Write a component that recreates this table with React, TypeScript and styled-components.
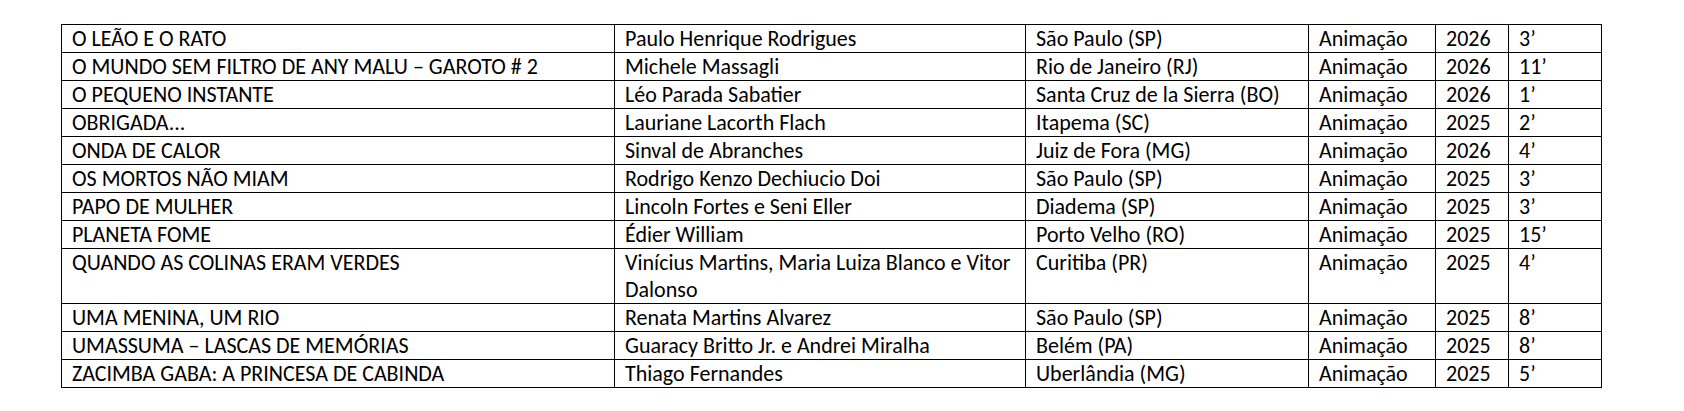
import React from "react";
import styled, { createGlobalStyle } from "styled-components";

const GlobalStyle = createGlobalStyle`
  html, body {
    margin: 0;
    padding: 0;
    background: #ffffff;
  }
  body {
    font-family: Carlito, Lato, "Liberation Sans", sans-serif;
    color: #000000;
  }
`;

const Page = styled.div`
  padding: 24px 0 0 61px;
`;

const Table = styled.table`
  border-collapse: collapse;
  table-layout: fixed;
  width: 1540px;
`;

const Col = styled.col<{ $w: number }>`
  width: ${(p) => p.$w}px;
`;

const Cell = styled.td`
  border: 1px solid #000000;
  padding: 0 10px;
  font-size: 22px;
  line-height: 27px;
  vertical-align: top;
  white-space: nowrap;
  overflow: hidden;
`;

type Row = {
  title: string;
  director: string[];
  place: string;
  genre: string;
  year: string;
  length: string;
};

const rows: Row[] = [
  { title: "O LEÃO E O RATO", director: ["Paulo Henrique Rodrigues"], place: "São Paulo (SP)", genre: "Animação", year: "2026", length: "3’" },
  { title: "O MUNDO SEM FILTRO DE ANY MALU – GAROTO # 2", director: ["Michele Massagli"], place: "Rio de Janeiro (RJ)", genre: "Animação", year: "2026", length: "11’" },
  { title: "O PEQUENO INSTANTE", director: ["Léo Parada Sabatier"], place: "Santa Cruz de la Sierra (BO)", genre: "Animação", year: "2026", length: "1’" },
  { title: "OBRIGADA...", director: ["Lauriane Lacorth Flach"], place: "Itapema (SC)", genre: "Animação", year: "2025", length: "2’" },
  { title: "ONDA DE CALOR", director: ["Sinval de Abranches"], place: "Juiz de Fora (MG)", genre: "Animação", year: "2026", length: "4’" },
  { title: "OS MORTOS NÃO MIAM", director: ["Rodrigo Kenzo Dechiucio Doi"], place: "São Paulo (SP)", genre: "Animação", year: "2025", length: "3’" },
  { title: "PAPO DE MULHER", director: ["Lincoln Fortes e Seni Eller"], place: "Diadema (SP)", genre: "Animação", year: "2025", length: "3’" },
  { title: "PLANETA FOME", director: ["Édier William"], place: "Porto Velho (RO)", genre: "Animação", year: "2025", length: "15’" },
  { title: "QUANDO AS COLINAS ERAM VERDES", director: ["Vinícius Martins, Maria Luiza Blanco e Vitor", "Dalonso"], place: "Curitiba (PR)", genre: "Animação", year: "2025", length: "4’" },
  { title: "UMA MENINA, UM RIO", director: ["Renata Martins Alvarez"], place: "São Paulo (SP)", genre: "Animação", year: "2025", length: "8’" },
  { title: "UMASSUMA – LASCAS DE MEMÓRIAS", director: ["Guaracy Britto Jr. e Andrei Miralha"], place: "Belém (PA)", genre: "Animação", year: "2025", length: "8’" },
  { title: "ZACIMBA GABA: A PRINCESA DE CABINDA", director: ["Thiago Fernandes"], place: "Uberlândia (MG)", genre: "Animação", year: "2025", length: "5’" },
];

const widths = [553, 411, 283, 127, 73, 93];

export default function App() {
  return (
    <>
      <GlobalStyle />
      <Page>
        <Table>
          <colgroup>
            {widths.map((w, i) => (
              <Col key={i} $w={w} />
            ))}
          </colgroup>
          <tbody>
            {rows.map((r) => (
              <tr key={r.title}>
                <Cell>{r.title}</Cell>
                <Cell>
                  {r.director.map((line, i) => (
                    <React.Fragment key={i}>
                      {i > 0 && <br />}
                      {line}
                    </React.Fragment>
                  ))}
                </Cell>
                <Cell>{r.place}</Cell>
                <Cell>{r.genre}</Cell>
                <Cell>{r.year}</Cell>
                <Cell>{r.length}</Cell>
              </tr>
            ))}
          </tbody>
        </Table>
      </Page>
    </>
  );
}
